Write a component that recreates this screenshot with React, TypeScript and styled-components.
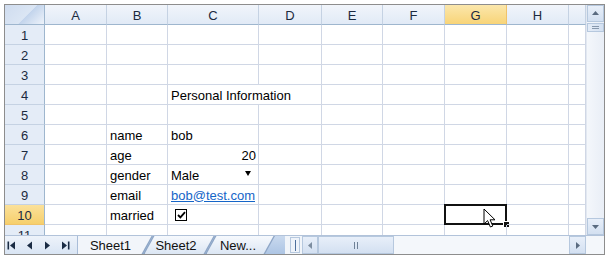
import React from 'react';
import styled, { createGlobalStyle, css } from 'styled-components';

const GlobalStyle = createGlobalStyle`
  html, body {
    margin: 0;
    padding: 0;
    background: #fff;
  }
  body {
    font-family: "Liberation Sans", Arial, sans-serif;
  }
`;

const COLS = ['A', 'B', 'C', 'D', 'E', 'F', 'G', 'H', ''];
const ROWS = [1, 2, 3, 4, 5, 6, 7, 8, 9, 10, 11];

const Frame = styled.div`
  margin: 4px 0 0 4px;
  width: 601px;
  height: 251px;
  box-sizing: border-box;
  border: 1px solid #8d8d8d;
  display: flex;
  flex-direction: column;
  overflow: hidden;
  background: #fff;
`;

const Body = styled.div`
  display: flex;
  height: 230px;
`;

const Sheet = styled.div`
  flex: 1;
  position: relative;
  overflow: hidden;
  display: grid;
  grid-template-columns: 40px 62px 61px 91px 63px 61px 62px 62px 62px 1fr;
  grid-template-rows: 20px;
  grid-auto-rows: 20px;
  font-size: 13px;
  color: #000;
`;

const Corner = styled.div`
  box-sizing: border-box;
  border-right: 1px solid #9eb6ce;
  border-bottom: 1px solid #9eb6ce;
  background: linear-gradient(135deg, #cfdcef 0%, #dbe6f4 55%, #c2d4ec 56%, #eef3fa 100%);
`;

const ColHead = styled.div<{ $active?: boolean }>`
  box-sizing: border-box;
  border-right: 1px solid #c5d2e3;
  border-bottom: 1px solid #9eb6ce;
  background: linear-gradient(#f1f5fb, #e1eaf6);
  color: #1b2a40;
  display: flex;
  align-items: center;
  justify-content: center;
  padding-top: 1px;
  ${(p) =>
    p.$active &&
    css`
      background: linear-gradient(#fbe7ac, #f8d478);
      border-right-color: #f0c36a;
    `}
`;

const RowHead = styled.div<{ $active?: boolean }>`
  box-sizing: border-box;
  border-right: 1px solid #9eb6ce;
  border-bottom: 1px solid #c5d2e3;
  background: #e4ecf7;
  color: #1b2a40;
  display: flex;
  align-items: center;
  justify-content: center;
  padding-top: 1px;
  ${(p) =>
    p.$active &&
    css`
      background: linear-gradient(#fbe19a, #f6cf6c);
      border-bottom-color: #f0c36a;
    `}
`;

const Cell = styled.div<{ $span?: number; $align?: 'left' | 'right'; $selected?: boolean }>`
  box-sizing: border-box;
  border-right: 1px solid #d0d7e5;
  border-bottom: 1px solid #d0d7e5;
  padding: 1px 2px 0 3px;
  display: flex;
  align-items: center;
  white-space: nowrap;
  position: relative;
  grid-column: span ${(p) => p.$span ?? 1};
  justify-content: ${(p) => (p.$align === 'right' ? 'flex-end' : 'flex-start')};
  ${(p) =>
    p.$selected &&
    css`
      &::before {
        content: '';
        position: absolute;
        left: -1px;
        top: -1px;
        right: -1px;
        bottom: -1px;
        border: 2px solid #111;
      }
      &::after {
        content: '';
        position: absolute;
        right: -3px;
        bottom: -3px;
        width: 5px;
        height: 5px;
        background: #111;
        border: 1px solid #fff;
        border-right: none;
        border-bottom: none;
      }
    `}
`;

const DropCell = styled(Cell)`
  justify-content: space-between;
  padding-right: 7px;
`;

const DropArrow = styled.span`
  width: 0;
  height: 0;
  border-left: 3px solid transparent;
  border-right: 3px solid transparent;
  border-top: 5px solid #000;
  margin-top: -4px;
`;

const Link = styled.span`
  color: #1565c8;
  text-decoration: underline;
`;

const CheckBox = styled.span`
  box-sizing: border-box;
  width: 12px;
  height: 12px;
  margin-left: 4px;
  border: 1px solid #000;
  display: flex;
  align-items: center;
  justify-content: center;
  background: #fff;
`;

const Cursor = styled.svg`
  position: absolute;
  left: 478px;
  top: 203px;
  pointer-events: none;
`;

const VScroll = styled.div`
  width: 17px;
  display: flex;
  flex-direction: column;
  background: linear-gradient(90deg, #f4f7fb, #e9eef6);
  border-left: 1px solid #e2e8f1;
`;

const ScrollButton = styled.div<{ $w?: number; $h?: number }>`
  box-sizing: border-box;
  width: ${(p) => p.$w ?? 17}px;
  height: ${(p) => p.$h ?? 17}px;
  flex: none;
  display: flex;
  align-items: center;
  justify-content: center;
  background: linear-gradient(#e8eff9, #d3e0f1);
  border: 1px solid #b6c8de;
`;

const VThumb = styled.div`
  box-sizing: border-box;
  height: 9px;
  margin-top: 1px;
  border: 1px solid #b6c8de;
  background: linear-gradient(90deg, #e4ecf7, #d3e0f1);
  display: flex;
  flex-direction: column;
  align-items: center;
  justify-content: center;
  gap: 1px;
`;

const GripH = styled.span`
  width: 7px;
  height: 1px;
  background: #8798ad;
`;

const Track = styled.div`
  flex: 1;
`;

const TabBar = styled.div`
  flex: 1;
  display: flex;
  border-top: 1px solid #b2c3da;
  background: #f1f5fa;
  font-size: 13px;
  color: #111;
`;

const Nav = styled.div`
  width: 73px;
  display: flex;
  align-items: center;
  justify-content: space-between;
  padding: 0 7px 0 2px;
  box-sizing: border-box;
  background: linear-gradient(#eef3fa, #d9e5f4);
  border-right: 1px solid #a9bdd8;
  position: relative;
  z-index: 3;
`;

const TabStrip = styled.div`
  width: 207px;
  display: flex;
  background: linear-gradient(#c9d9ee, #adc5e4);
`;

const Tab = styled.div<{ $w: number; $first?: boolean; $active?: boolean }>`
  width: ${(p) => p.$w}px;
  flex: none;
  position: relative;
  margin-left: ${(p) => (p.$first ? 0 : -10)}px;
  z-index: ${(p) => (p.$active ? 2 : 1)};
  background: #8ea6c6;
  clip-path: ${(p) =>
    p.$first
      ? 'polygon(0 0, 100% 0, calc(100% - 10px) 100%, 0 100%)'
      : 'polygon(10px 0, 100% 0, calc(100% - 10px) 100%, 0 100%)'};
  &::before {
    content: '';
    position: absolute;
    top: 0;
    bottom: 0;
    left: ${(p) => (p.$first ? 0 : 1.5)}px;
    right: 1.5px;
    background: ${(p) => (p.$active ? '#f2f5fa' : 'linear-gradient(#f6f9fd, #dbe6f4)')};
    clip-path: ${(p) =>
      p.$first
        ? 'polygon(0 0, 100% 0, calc(100% - 10px) 100%, 0 100%)'
        : 'polygon(10px 0, 100% 0, calc(100% - 10px) 100%, 0 100%)'};
  }
`;

const TabLabel = styled.span<{ $dx?: number }>`
  position: relative;
  left: ${(p) => p.$dx ?? 0}px;
  display: flex;
  height: 100%;
  align-items: center;
  justify-content: center;
`;

const Splitter = styled.div`
  width: 10px;
  margin: 1px 2px 1px 5px;
  box-sizing: border-box;
  border: 1px solid #b6c8de;
  background: #eef3fa;
  display: flex;
  justify-content: center;
  align-items: center;
`;

const SplitBar = styled.span`
  width: 1px;
  height: 11px;
  background: #4d6f9c;
`;

const HThumb = styled.div`
  box-sizing: border-box;
  width: 76px;
  border: 1px solid #b6c8de;
  background: linear-gradient(#e8eff9, #d3e0f1);
  display: flex;
  justify-content: center;
  align-items: center;
  gap: 2px;
`;

const GripV = styled.span`
  width: 1px;
  height: 7px;
  background: #6f8197;
`;

const HTrack = styled.div`
  flex: 1;
  background: #f4f7fb;
`;

const CornerBox = styled.div`
  width: 18px;
  background: #f4f7fb;
`;

const Tri = ({ dir, color = '#5a6b80', size = 7 }: { dir: 'up' | 'down' | 'left' | 'right'; color?: string; size?: number }) => {
  const pts = {
    up: '0,5 7,5 3.5,1',
    down: '0,2 7,2 3.5,6',
    left: '5,0 5,7 1,3.5',
    right: '2,0 2,7 6,3.5',
  }[dir];
  return (
    <svg width={size} height={size} viewBox="0 0 7 7">
      <polygon points={pts} fill={color} />
    </svg>
  );
};

const NavIcon = ({ kind }: { kind: 'first' | 'prev' | 'next' | 'last' }) => (
  <svg width="9" height="9" viewBox="0 0 9 9">
    {kind === 'first' && (
      <>
        <rect x="0.5" y="0.5" width="1.6" height="8" fill="#1b2c44" />
        <polygon points="8,0.5 8,8.5 3,4.5" fill="#1b2c44" />
      </>
    )}
    {kind === 'prev' && <polygon points="7,0.5 7,8.5 2,4.5" fill="#1b2c44" />}
    {kind === 'next' && <polygon points="2,0.5 2,8.5 7,4.5" fill="#1b2c44" />}
    {kind === 'last' && (
      <>
        <polygon points="1,0.5 1,8.5 6,4.5" fill="#1b2c44" />
        <rect x="6.9" y="0.5" width="1.6" height="8" fill="#1b2c44" />
      </>
    )}
  </svg>
);

const Check = () => (
  <svg width="9" height="8" viewBox="0 0 9 8">
    <path d="M1 4 L3.4 6.4 L8 1.2" stroke="#000" strokeWidth="1.8" fill="none" />
  </svg>
);

type RowData = { b?: string; c?: React.ReactNode; kind?: 'title' | 'num' | 'drop' | 'check' };

const DATA: Record<number, RowData> = {
  4: { kind: 'title', c: 'Personal Information' },
  6: { b: 'name', c: 'bob' },
  7: { b: 'age', c: '20', kind: 'num' },
  8: { b: 'gender', c: 'Male', kind: 'drop' },
  9: { b: 'email', c: <Link>bob@test.com</Link> },
  10: { b: 'married', kind: 'check' },
};

const renderRow = (r: number) => {
  const d = DATA[r] ?? {};
  const cells: React.ReactNode[] = [
    <RowHead key="h" $active={r === 10}>{r}</RowHead>,
    <Cell key="a" />,
    <Cell key="b">{d.b}</Cell>,
  ];
  if (d.kind === 'title') {
    cells.push(<Cell key="c" $span={2}>{d.c}</Cell>);
  } else {
    if (d.kind === 'num') cells.push(<Cell key="c" $align="right">{d.c}</Cell>);
    else if (d.kind === 'drop')
      cells.push(
        <DropCell key="c">
          {d.c}
          <DropArrow />
        </DropCell>
      );
    else if (d.kind === 'check')
      cells.push(
        <Cell key="c">
          <CheckBox>
            <Check />
          </CheckBox>
        </Cell>
      );
    else cells.push(<Cell key="c">{d.c}</Cell>);
    cells.push(<Cell key="d" />);
  }
  cells.push(<Cell key="e" />, <Cell key="f" />, <Cell key="g" $selected={r === 10} />, <Cell key="hh" />, <Cell key="i" />);
  return cells;
};

export default function App() {
  return (
    <>
      <GlobalStyle />
      <Frame>
        <Body>
          <Sheet>
            <Corner />
            {COLS.map((c, i) => (
              <ColHead key={i} $active={c === 'G'}>
                {c}
              </ColHead>
            ))}
            {ROWS.map((r) => renderRow(r))}
            <Cursor width="14" height="21" viewBox="0 0 14 21">
              <path
                d="M1 1 L1 16 L4.6 12.6 L7.4 19 L9.8 18 L7.1 11.8 L12 11.8 Z"
                fill="#fff"
                stroke="#000"
                strokeWidth="1"
                strokeLinejoin="round"
              />
            </Cursor>
          </Sheet>
          <VScroll>
            <ScrollButton>
              <Tri dir="up" />
            </ScrollButton>
            <VThumb>
              <GripH />
              <GripH />
            </VThumb>
            <Track />
            <ScrollButton>
              <Tri dir="down" />
            </ScrollButton>
          </VScroll>
        </Body>
        <TabBar>
          <Nav>
            <NavIcon kind="first" />
            <NavIcon kind="prev" />
            <NavIcon kind="next" />
            <NavIcon kind="last" />
          </Nav>
          <TabStrip>
            <Tab $w={75} $first $active>
              <TabLabel $dx={-5}>Sheet1</TabLabel>
            </Tab>
            <Tab $w={72}>
              <TabLabel $dx={-3}>Sheet2</TabLabel>
            </Tab>
            <Tab $w={70}>
              <TabLabel $dx={-2}>New...</TabLabel>
            </Tab>
          </TabStrip>
          <Splitter>
            <SplitBar />
          </Splitter>
          <ScrollButton $w={16} $h={18}>
            <Tri dir="left" color="#7d8da0" />
          </ScrollButton>
          <HThumb>
            <GripV />
            <GripV />
          </HThumb>
          <HTrack />
          <ScrollButton $w={17} $h={18}>
            <Tri dir="right" />
          </ScrollButton>
          <CornerBox />
        </TabBar>
      </Frame>
    </>
  );
}
